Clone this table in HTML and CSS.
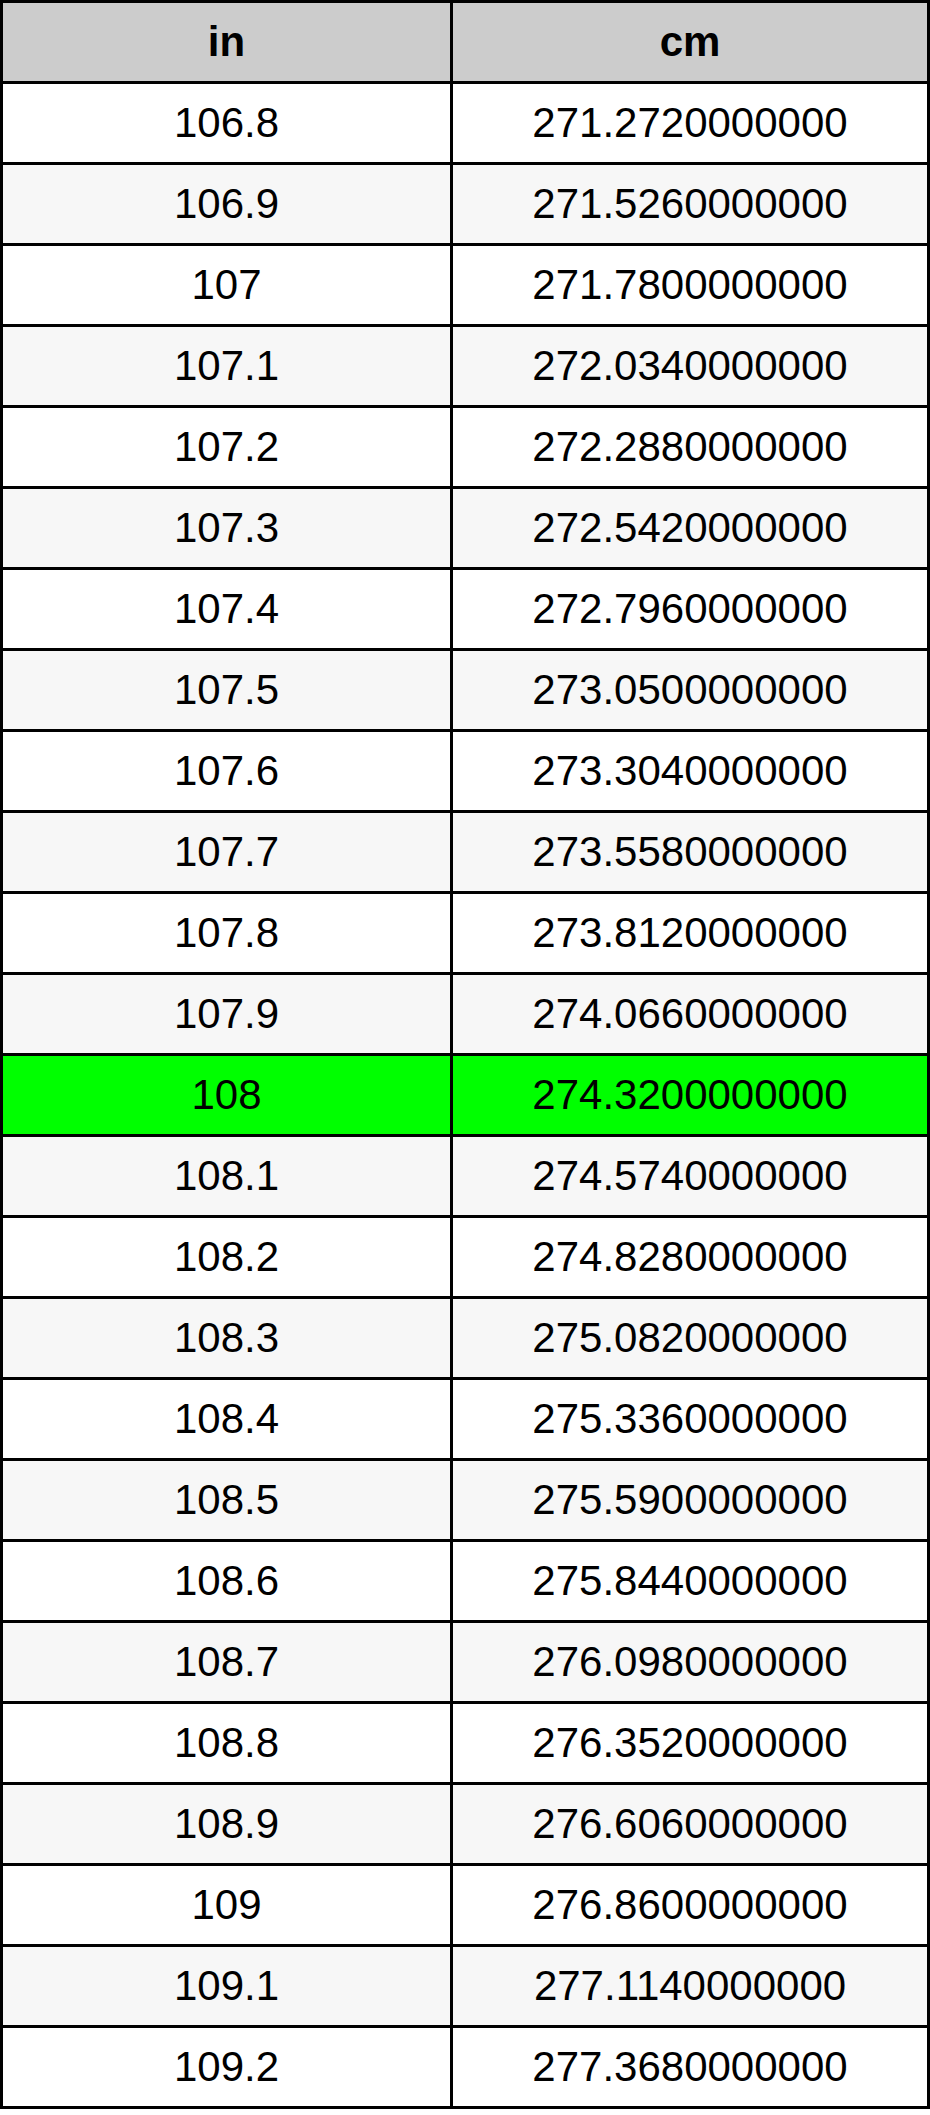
FILE: index.html
```html
<!DOCTYPE html>
<html>
<head>
<meta charset="utf-8">
<link rel="stylesheet" href="styles.css">
</head>
<body>
<table class="conv">
<thead>
<tr><th class="c1">in</th><th class="c2">cm</th></tr>
</thead>
<tbody>
<tr><td>106.8</td><td>271.2720000000</td></tr>
<tr class="alt"><td>106.9</td><td>271.5260000000</td></tr>
<tr><td>107</td><td>271.7800000000</td></tr>
<tr class="alt"><td>107.1</td><td>272.0340000000</td></tr>
<tr><td>107.2</td><td>272.2880000000</td></tr>
<tr class="alt"><td>107.3</td><td>272.5420000000</td></tr>
<tr><td>107.4</td><td>272.7960000000</td></tr>
<tr class="alt"><td>107.5</td><td>273.0500000000</td></tr>
<tr><td>107.6</td><td>273.3040000000</td></tr>
<tr class="alt"><td>107.7</td><td>273.5580000000</td></tr>
<tr><td>107.8</td><td>273.8120000000</td></tr>
<tr class="alt"><td>107.9</td><td>274.0660000000</td></tr>
<tr class="hl"><td>108</td><td>274.3200000000</td></tr>
<tr class="alt"><td>108.1</td><td>274.5740000000</td></tr>
<tr><td>108.2</td><td>274.8280000000</td></tr>
<tr class="alt"><td>108.3</td><td>275.0820000000</td></tr>
<tr><td>108.4</td><td>275.3360000000</td></tr>
<tr class="alt"><td>108.5</td><td>275.5900000000</td></tr>
<tr><td>108.6</td><td>275.8440000000</td></tr>
<tr class="alt"><td>108.7</td><td>276.0980000000</td></tr>
<tr><td>108.8</td><td>276.3520000000</td></tr>
<tr class="alt"><td>108.9</td><td>276.6060000000</td></tr>
<tr><td>109</td><td>276.8600000000</td></tr>
<tr class="alt"><td>109.1</td><td>277.1140000000</td></tr>
<tr><td>109.2</td><td>277.3680000000</td></tr>
</tbody>
</table>
</body>
</html>
```
FILE: styles.css
```css
html, body {
  margin: 0;
  padding: 0;
  background: #ffffff;
}
.conv {
  width: 930px;
  border-collapse: separate;
  border-spacing: 0;
  border-top: 3px solid #000;
  border-left: 3px solid #000;
  table-layout: fixed;
  font-family: "Liberation Sans", Arial, sans-serif;
  font-size: 42px;
  color: #000;
  box-sizing: border-box;
}
.conv th, .conv td {
  box-sizing: border-box;
  border-right: 3px solid #000;
  border-bottom: 3px solid #000;
  padding: 0;
  text-align: center;
  vertical-align: middle;
  line-height: 78px;
}
.conv .c1 { width: 450px; }
.conv .c2 { width: 477px; }
.conv th {
  background: #cccccc;
  font-weight: bold;
}
.conv td { background: #ffffff; }
.conv tr.alt td { background: #f7f7f7; }
.conv tr.hl td { background: #00ff00; }
```
